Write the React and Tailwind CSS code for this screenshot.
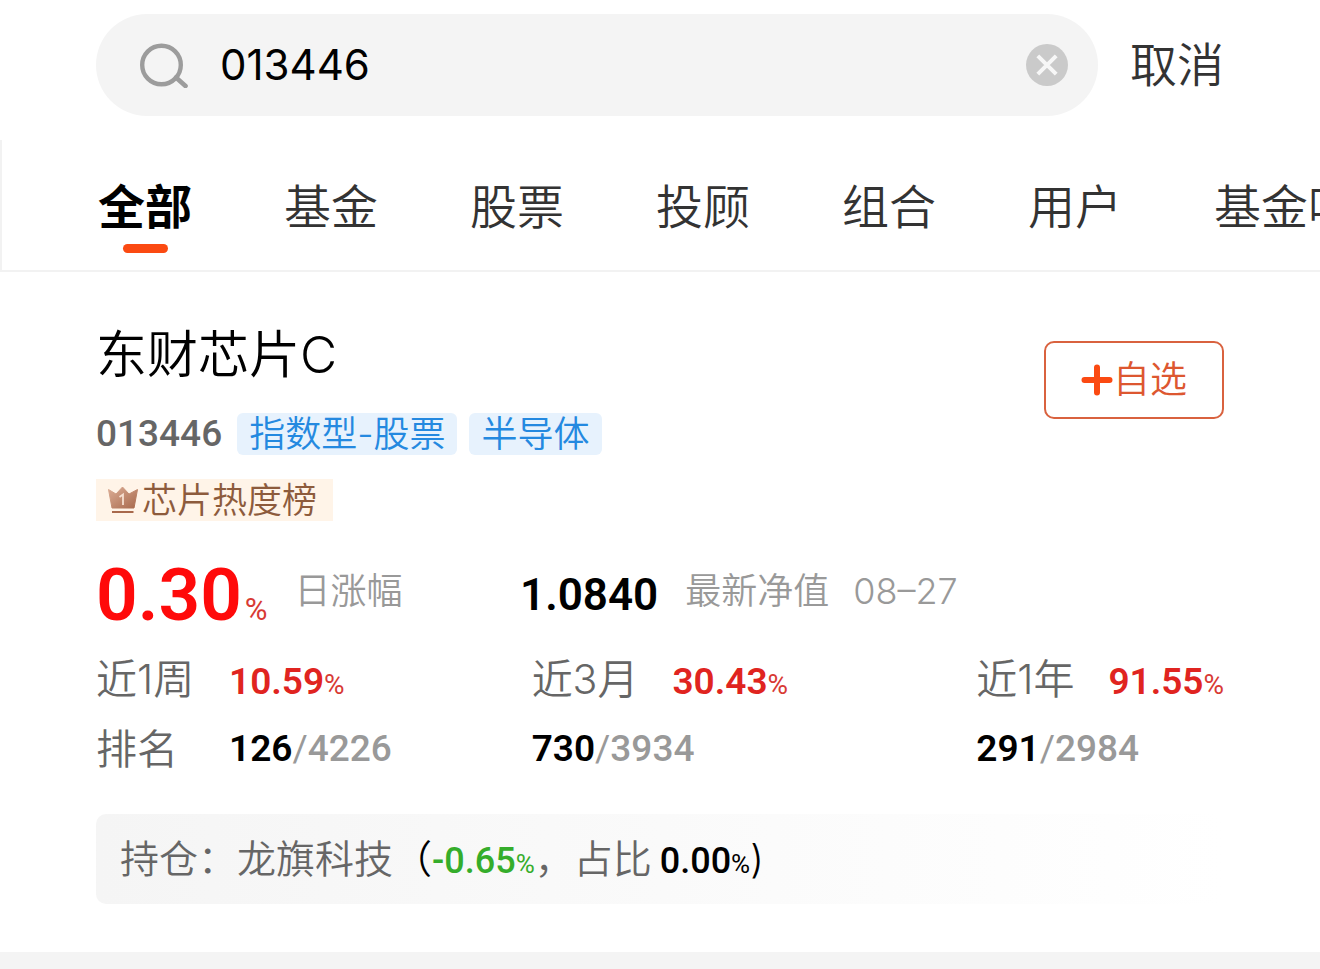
import { useState } from "react";

const tabs = ["全部", "基金", "股票", "投顾", "组合", "用户", "基金吧"];

const periods = [
  { label: "近1周", value: "10.59", rank: "126", total: "4226" },
  { label: "近3月", value: "30.43", rank: "730", total: "3934" },
  { label: "近1年", value: "91.55", rank: "291", total: "2984" },
];

function SearchIcon() {
  return (
    <svg viewBox="0 0 48 46" className="h-[46px] w-12 shrink-0" fill="none" stroke="#9c9c9c" strokeLinecap="round">
      <circle cx="21.500" cy="23" r="19.300" strokeWidth="4.400" />
      <path d="M36 35.500 L45.500 44" strokeWidth="4.600" />
    </svg>
  );
}

function ClearIcon() {
  return (
    <svg viewBox="0 0 42 42" className="size-[42px]">
      <circle cx="21" cy="21" r="21" fill="#cacaca" />
      <path d="M11.800 11.800 L30.200 30.200 M30.200 11.800 L11.800 30.200" stroke="#f7f7f7" strokeWidth="4" />
    </svg>
  );
}

function CrownIcon() {
  return (
    <svg viewBox="0 0 32 28" className="h-7 w-8 shrink-0">
      <defs>
        <linearGradient id="crown" x1="0" y1="0" x2="1" y2="1">
          <stop offset="0" stopColor="#dcae96" />
          <stop offset="1" stopColor="#a8694c" />
        </linearGradient>
      </defs>
      <path d="M1.500 3.500 L9 8 L15.500 1 L22 8 L30.500 3.500 L27 22 H5 Z" fill="url(#crown)" stroke="url(#crown)" strokeLinejoin="round" />
      <path d="M5 26 H26.500" stroke="#a8694c" strokeWidth="2" />
      <path d="M12.500 11 L16 8.500 V19" fill="none" stroke="#f6dfd0" strokeWidth="1.800" />
    </svg>
  );
}

function PlusIcon() {
  return (
    <svg viewBox="0 0 32 32" className="size-8 shrink-0" stroke="#fb4a12" strokeWidth="6" strokeLinecap="round">
      <path d="M16 3.500 V28.500 M3.500 16 H28.500" />
    </svg>
  );
}

export default function App() {
  const [query, setQuery] = useState("013446");
  const [active, setActive] = useState("全部");

  return (
    <div className="flex min-h-screen flex-col overflow-hidden bg-white font-['Inter','Noto_Sans_CJK_SC',sans-serif] text-black">
      <header className="flex items-center gap-8 px-24 pt-[14px] pb-6">
        <form className="flex h-[102px] min-w-0 flex-1 items-center rounded-full bg-[#f4f4f4] pr-[30px] pl-11" onSubmit={(e) => e.preventDefault()}>
          <SearchIcon />
          <input
            aria-label="搜索"
            value={query}
            onChange={(e) => setQuery(e.target.value)}
            className="ml-8 min-w-0 flex-1 bg-transparent text-[42px] leading-[60px] outline-none"
          />
          <button type="button" aria-label="清除" onClick={() => setQuery("")}>
            <ClearIcon />
          </button>
        </form>
        <button type="button" className="text-[47px] leading-[60px] font-[350] whitespace-nowrap text-[#333333]">取消</button>
      </header>

      <nav className="flex h-[132px] gap-[92px] border-b-2 border-l-2 border-[#f2f2f2] pt-[37px] pl-24">
        {tabs.map((tab) => (
          <button
            key={tab}
            type="button"
            onClick={() => setActive(tab)}
            className={
              tab === active
                ? "flex shrink-0 flex-col items-center text-[47px] leading-[60px] font-bold"
                : "flex shrink-0 flex-col items-center text-[47px] leading-[60px] font-[350] text-[#333333]"
            }
          >
            {tab}
            {tab === active && <span className="mt-[7px] h-[9px] w-[45px] rounded-full bg-[#fb4a12]" />}
          </button>
        ))}
      </nav>

      <main className="px-24 pt-[49px] pb-12">
        <div className="flex items-start justify-between">
          <div>
            <h1 className="text-[51px] leading-[68px] font-[350]">东财芯片C</h1>
            <div className="mt-6 flex items-center gap-3">
              <span className="mr-[3px] font-['Roboto',sans-serif] text-[37px] leading-[42px] font-medium text-[#666666]">013446</span>
              <span className="rounded-md bg-[#e7f2fd] px-3 text-[36px] leading-[42px] font-[350] text-[#2489e0]">指数型-股票</span>
              <span className="rounded-md bg-[#e7f2fd] px-3 text-[36px] leading-[42px] font-[350] text-[#2489e0]">半导体</span>
            </div>
            <div className="mt-6 flex w-fit items-center bg-[#fff4e8] pr-4 pl-[11px] text-[35px] leading-[42px] font-[350] text-[#8d5b3c]">
              <CrownIcon />
              <span className="ml-[3px]">芯片热度榜</span>
            </div>
          </div>
          <button type="button" className="mt-5 flex h-[78px] w-[180px] items-center justify-center rounded-[10px] border-2 border-[#d9623f] text-[37px] leading-[48px] font-[350] text-[#dd5730]">
            <PlusIcon />
            自选
          </button>
        </div>

        <div className="mt-[30px] flex h-[88px] items-center text-[36px] leading-[50px] font-[350] text-[#999999]">
          <div className="flex w-[424px] items-center">
            <div className="flex items-baseline font-['Roboto',sans-serif]">
              <span className="text-[73px] leading-[88px] font-semibold text-[#ff0a0a]">0.30</span>
              <span className="ml-[3px] text-[31px] font-normal text-[#d83a34]">%</span>
            </div>
            <span className="mb-2 ml-[27px]">日涨幅</span>
          </div>
          <span className="font-['Roboto',sans-serif] text-[44px] font-semibold text-black">1.0840</span>
          <span className="mb-2 ml-[27px]">最新净值</span>
          <span className="mb-2 ml-6">08–27</span>
        </div>

        <div className="mt-[5px] grid grid-cols-[436fr_445fr_247fr] whitespace-nowrap">
          {periods.map((p, i) => (
            <div key={p.label}>
              <div className="flex h-[70px] items-baseline">
                <span className={i === 0 ? "w-[133px] text-[41px] leading-[70px] font-[350] text-[#666666]" : "mr-[34px] text-[41px] leading-[70px] font-[350] text-[#666666]"}>{p.label}</span>
                <span className="font-['Roboto',sans-serif] text-[37px] font-semibold text-[#e02420]">{p.value}</span>
                <span className="font-['Roboto',sans-serif] text-[28px] text-[#d83a34]">%</span>
              </div>
              <div className="flex h-[70px] items-center leading-[70px]">
                {i === 0 && <span className="w-[133px] text-[41px] font-[350] text-[#666666]">排名</span>}
                <span className="font-['Roboto',sans-serif] text-[37px] font-semibold">{p.rank}</span>
                <span className="font-['Roboto',sans-serif] text-[37px] text-[#999999]">/</span>
                <span className="font-['Roboto',sans-serif] text-[37px] font-medium text-[#999999]">{p.total}</span>
              </div>
            </div>
          ))}
        </div>

        <div className="mt-[30px] flex h-[90px] items-baseline rounded-[10px] bg-linear-to-r from-[#f5f5f5] to-white pl-6 text-[39px] leading-[90px] font-[350] whitespace-nowrap text-[#666666]">
          <span>持仓：龙旗科技</span>
          <span className="text-black">（</span>
          <span className="font-['Roboto',sans-serif] text-[36px] font-medium text-[#35ad2b]">-0.65</span>
          <span className="font-['Roboto',sans-serif] text-[26px] font-normal text-[#35ad2b]">%</span>
          <span>，占比</span>
          <span className="ml-2 font-['Roboto',sans-serif] text-[36px] font-medium text-black">0.00</span>
          <span className="font-['Roboto',sans-serif] text-[26px] font-normal text-black">%</span>
          <span className="text-black">)</span>
        </div>
      </main>

      <div className="flex-1 bg-[#f4f4f4]" />
    </div>
  );
}
